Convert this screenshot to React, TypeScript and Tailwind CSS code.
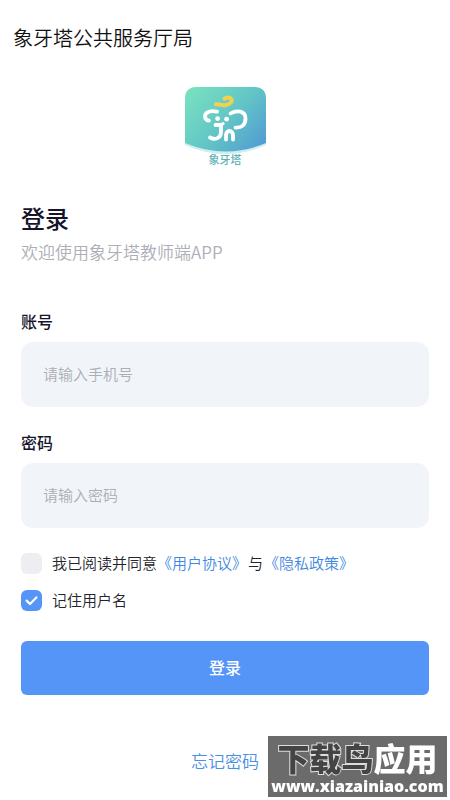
import { useState } from 'react';

const fontStack = "font-['Noto_Sans_CJK_SC',sans-serif]";

type FieldProps = {
  id: string;
  label: string;
  type: string;
  placeholder: string;
  value: string;
  onChange: (value: string) => void;
};

function Field({ id, label, type, placeholder, value, onChange }: FieldProps) {
  return (
    <div className="flex flex-col gap-[9px]">
      <label htmlFor={id} className="text-base leading-6 font-medium text-[#14142b]">
        {label}
      </label>
      <input
        id={id}
        type={type}
        placeholder={placeholder}
        value={value}
        onChange={(e) => onChange(e.target.value)}
        className="h-[65px] w-full rounded-xl bg-[#f1f5fa] px-[22px] pb-0.5 text-[15px] font-[350] text-[#14142b] outline-none placeholder:text-[#acaeb5]"
      />
    </div>
  );
}

type CheckProps = {
  id: string;
  checked: boolean;
  onChange: (checked: boolean) => void;
};

function Check({ id, checked, onChange }: CheckProps) {
  return (
    <span className="grid size-[21px] shrink-0">
      <input
        id={id}
        type="checkbox"
        checked={checked}
        onChange={(e) => onChange(e.target.checked)}
        className="col-start-1 row-start-1 size-[21px] appearance-none rounded-md bg-[#eeeef2] checked:bg-[#5595f7]"
      />
      {checked && (
        <svg viewBox="0 0 21 21" className="pointer-events-none col-start-1 row-start-1 size-[21px]" fill="none">
          <path d="M5.6 10.6 9 14 15.4 7.4" stroke="#fff" strokeWidth="2.2" strokeLinecap="round" strokeLinejoin="round" />
        </svg>
      )}
    </span>
  );
}

function Logo() {
  return (
    <div className="flex w-[81px] flex-col items-center">
      <svg viewBox="0 0 81 67" className="w-full" fill="none">
        <defs>
          <linearGradient id="logoBg" x1="8" y1="4" x2="76" y2="64" gradientUnits="userSpaceOnUse">
            <stop offset="0" stopColor="#76dfc0" />
            <stop offset="0.5" stopColor="#62c5c6" />
            <stop offset="1" stopColor="#519bd2" />
          </linearGradient>
        </defs>
        <path d="M0 12Q0 0 12 0H69Q81 0 81 12V58Q41 76 0 58Z" fill="#cdeeed" />
        <path d="M0 12Q0 0 12 0H69Q81 0 81 12V56Q41 73 0 56Z" fill="url(#logoBg)" />
        <path
          d="M31 17.3C34 16.5 36 18.6 40 18.2C45 17.6 48 14.4 46 11.8C44.6 10 41.5 10 39.5 11.6"
          stroke="#f6d04d"
          strokeWidth="4"
          strokeLinecap="round"
        />
        <g stroke="#fff" strokeWidth="3.8" strokeLinecap="round" strokeLinejoin="round">
          <path d="M32 24.6C25 23 20 25.5 20 29.2C20 32 21.5 33.3 24 33.6" />
          <path d="M45.5 26.5C52 22.5 60.5 24 60.5 31.5C60.5 38 56.5 41 50.5 40.6" />
          <path d="M30.5 38H36V45C36 51 30 53.5 25 50.5" />
          <path d="M41 52.5V48.5C41 42.5 48 42.5 48 48.5V52.5" />
        </g>
        <circle cx="32.6" cy="31.6" r="2.4" fill="#fff" />
        <circle cx="41.6" cy="32.2" r="2.4" fill="#fff" />
        <circle cx="38" cy="36.6" r="1.6" fill="#fff" />
      </svg>
      <span className="text-[11px] leading-[11px] font-medium text-[#5fb3b5]">象牙塔</span>
    </div>
  );
}

function Watermark() {
  return (
    <div className="fixed right-[3px] bottom-[3px] flex h-[61px] w-[179px] flex-col items-center bg-[#6b6b6b] pt-0.5 text-white">
      <div className="text-[32px] leading-[38px] font-black whitespace-nowrap">
        <span className="text-[#444] [-webkit-text-stroke:2px_#ddd] [paint-order:stroke_fill]">下载鸟</span>
        <span>应用</span>
      </div>
      <div className="font-['Open_Sans',sans-serif] text-base leading-5 font-extrabold">www.xiazainiao.com</div>
    </div>
  );
}

export default function App() {
  const [account, setAccount] = useState('');
  const [password, setPassword] = useState('');
  const [agreed, setAgreed] = useState(false);
  const [remember, setRemember] = useState(true);

  return (
    <div className={`min-h-screen bg-white ${fontStack}`}>
      <header className="px-[13px] pt-6">
        <h1 className="text-xl leading-7 font-[350] text-[#111]">象牙塔公共服务厅局</h1>
      </header>

      <main className="flex flex-col px-[21px] pt-[35px]">
        <div className="flex justify-center">
          <Logo />
        </div>

        <h2 className="mt-[37px] text-2xl leading-8 font-medium text-[#14142b]">登录</h2>
        <p className="mt-1 text-[17px] leading-7 font-[350] text-[#adaeb6]">欢迎使用象牙塔教师端APP</p>

        <form onSubmit={(e) => e.preventDefault()}>
          <div className="mt-[43px] flex flex-col gap-[23px]">
            <Field id="account" label="账号" type="tel" placeholder="请输入手机号" value={account} onChange={setAccount} />
            <Field id="password" label="密码" type="password" placeholder="请输入密码" value={password} onChange={setPassword} />
          </div>

          <div className="mt-[23px] flex flex-col gap-[13px] text-[15px] leading-6 font-[350] text-[#23242c]">
            <div className="flex items-center gap-[10px]">
              <Check id="agree" checked={agreed} onChange={setAgreed} />
              <div>
                <label htmlFor="agree">我已阅读并同意</label>
                <a href="#terms" className="text-[#3f88e0]">《用户协议》</a>
                <span className="mx-px">与</span>
                <a href="#privacy" className="text-[#3f88e0]">《隐私政策》</a>
              </div>
            </div>
            <div className="flex items-center gap-[10px]">
              <Check id="remember" checked={remember} onChange={setRemember} />
              <label htmlFor="remember">记住用户名</label>
            </div>
          </div>

          <button type="submit" className="mt-[29px] h-[54px] w-full rounded-md bg-[#5595f7] pb-0.5 text-base font-medium text-white">
            登录
          </button>
        </form>

        <a href="#forgot" className="mt-[52px] self-center text-[17px] leading-7 font-[350] text-[#4a90e2]">
          忘记密码
        </a>
      </main>

      <Watermark />
    </div>
  );
}
